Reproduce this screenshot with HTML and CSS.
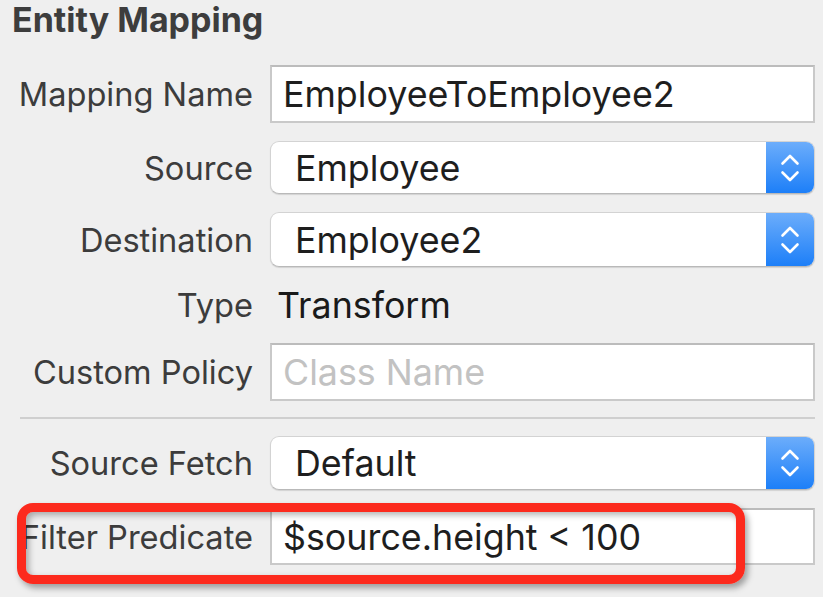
FILE: index.html
```html
<!DOCTYPE html>
<html>
<head>
<meta charset="utf-8">
<link rel="stylesheet" href="styles.css">
</head>
<body>
<div class="panel">
  <h1 class="title">Entity Mapping</h1>
  <div class="form">
    <div class="row r-name">
      <div class="lbl">Mapping Name</div>
      <div class="field text">EmployeeToEmployee2</div>
    </div>
    <div class="row r-src">
      <div class="lbl">Source</div>
      <div class="field popup"><span class="pv">Employee</span><span class="step"><svg width="24" height="36" viewBox="0 0 24 36"><polyline points="4.5,13.5 12,6 19.5,13.5"/><polyline points="4.5,22.5 12,30 19.5,22.5"/></svg></span></div>
    </div>
    <div class="row r-dst">
      <div class="lbl">Destination</div>
      <div class="field popup"><span class="pv">Employee2</span><span class="step"><svg width="24" height="36" viewBox="0 0 24 36"><polyline points="4.5,13.5 12,6 19.5,13.5"/><polyline points="4.5,22.5 12,30 19.5,22.5"/></svg></span></div>
    </div>
    <div class="row r-type">
      <div class="lbl">Type</div>
      <div class="static">Transform</div>
    </div>
    <div class="row r-policy">
      <div class="lbl">Custom Policy</div>
      <div class="field text placeholder">Class Name</div>
    </div>
    <div class="sep"></div>
    <div class="row r-fetch">
      <div class="lbl">Source Fetch</div>
      <div class="field popup"><span class="pv">Default</span><span class="step"><svg width="24" height="36" viewBox="0 0 24 36"><polyline points="4.5,13.5 12,6 19.5,13.5"/><polyline points="4.5,22.5 12,30 19.5,22.5"/></svg></span></div>
    </div>
    <div class="row r-filter">
      <div class="lbl">Filter Predicate</div>
      <div class="field text">$source.height &lt; 100</div>
    </div>
  </div>
  <div class="highlight"></div>
</div>
</body>
</html>
```

FILE: styles.css
```css
* { box-sizing: border-box; }
html, body {
  margin: 0;
  padding: 0;
  background: #efefef;
  width: 823px;
  height: 597px;
  overflow: hidden;
}
.panel {
  position: relative;
  font-family: Inter, "Noto Sans", sans-serif;
  color: #3a3a3a;
}
.title {
  margin: 0;
  padding-left: 12px;
  height: 40px;
  line-height: 40px;
  font-size: 34px;
  font-weight: 700;
  color: #3d3d3d;
}
.form {
  margin-top: 25px;
  display: flex;
  flex-direction: column;
}
.row {
  display: flex;
  align-items: center;
  font-size: 35.8px;
}
.lbl {
  width: 253px;
  margin-right: 17px;
  text-align: right;
  white-space: nowrap;
  font-size: 32.6px;
  color: #3c3c3c;
}
.r-name { height: 58px; }
.r-src { height: 53px; margin-top: 18px; }
.r-dst { height: 55px; margin-top: 18px; }
.r-type { height: 40px; margin-top: 18px; }
.r-policy { height: 58px; margin-top: 18px; }
.sep {
  margin: 16px 0 0 20px;
  width: 795px;
  height: 2px;
  background: #cfcfcf;
}
.r-fetch { height: 54px; margin-top: 17px; }
.r-filter { height: 57px; margin-top: 18px; }

.field {
  width: 545px;
  height: 100%;
  background: #fff;
  color: #1e1e1e;
  display: flex;
  align-items: center;
  white-space: nowrap;
}
.text {
  border: 2px solid #c9c9c9;
  border-top-color: #bcbcbc;
  padding-left: 11px;
}
.placeholder { color: #c2c2c2; }
.popup {
  border: 1px solid #d3d3d3;
  border-bottom-color: #b9b9b9;
  border-radius: 9px;
  box-shadow: 0 1px 1px rgba(0,0,0,0.12);
  overflow: hidden;
}
.pv {
  flex: 1;
  padding-left: 24px;
}
.step {
  width: 48px;
  height: 100%;
  background: linear-gradient(#6cadfb, #1d7ff8);
  display: flex;
  align-items: center;
  justify-content: center;
}
.step svg polyline {
  fill: none;
  stroke: #fff;
  stroke-width: 2.6;
  stroke-linecap: round;
  stroke-linejoin: round;
}
.static {
  padding-left: 7px;
  color: #1a1a1a;
}
.highlight {
  position: absolute;
  left: 17px;
  top: 503px;
  width: 728px;
  height: 81px;
  border: 9px solid #fc2a1d;
  border-radius: 16px;
  box-shadow: 3px 4px 6px rgba(0,0,0,0.35), inset 3px 3px 6px rgba(0,0,0,0.3);
}
```
